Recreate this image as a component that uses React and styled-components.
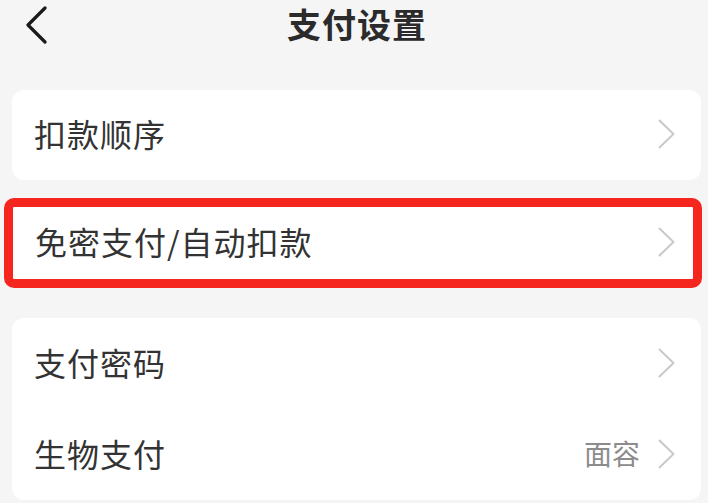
import React from 'react';
import styled, { createGlobalStyle } from 'styled-components';

const GlobalStyle = createGlobalStyle`
  html, body {
    margin: 0;
    padding: 0;
    background: #f5f5f5;
  }
  body {
    font-family: "Noto Sans CJK SC", "Noto Sans", sans-serif;
    color: #333333;
  }
`;

const Page = styled.div`
  width: 708px;
  height: 503px;
  overflow: hidden;
  background: #f5f5f5;
`;

const Header = styled.div`
  position: relative;
  height: 50px;
  display: flex;
  align-items: center;
  justify-content: center;
`;

const BackButton = styled.button`
  position: absolute;
  left: 22px;
  top: 4px;
  width: 28px;
  height: 42px;
  padding: 0;
  border: none;
  background: transparent;
  display: flex;
  align-items: center;
  justify-content: center;
`;

const Title = styled.h1`
  margin: 0 0 3px;
  font-size: 34px;
  font-weight: 600;
  letter-spacing: 1px;
  color: #2b2b2b;
  line-height: 1;
  transform: translateX(3px);
`;

const Content = styled.div`
  display: flex;
  flex-direction: column;
  padding: 40px 7px 0 12px;
`;

const Card = styled.div`
  background: #ffffff;
  border-radius: 12px;
  display: flex;
  flex-direction: column;
  margin-bottom: ${({ gap }) => gap || 0}px;
`;

const Highlight = styled.div`
  margin: 0 -1px 30px -8px;
  border: 9px solid #f5261e;
  border-radius: 10px;
  background: #ffffff;
`;

const Row = styled.div`
  height: ${({ h }) => h}px;
  box-sizing: border-box;
  display: flex;
  align-items: center;
  padding: 0 ${({ right }) => right || 26}px 4px 22px;
`;

const Label = styled.span`
  flex: 1;
  font-size: 32px;
  letter-spacing: 1px;
  color: #333333;
  line-height: 1;
`;

const Value = styled.span`
  font-size: 28px;
  color: #8c8c8c;
  margin-right: 18px;
  line-height: 1;
`;

const ChevronIcon = styled.svg`
  flex: none;
  margin-top: 2px;
`;

const Chevron = () => (
  <ChevronIcon width="17" height="30" viewBox="0 0 17 30" fill="none">
    <path d="M1.5 1.5 L15.5 15 L1.5 28.5" stroke="#c9c9c9" strokeWidth="2" strokeLinecap="round" strokeLinejoin="round" />
  </ChevronIcon>
);

const BackIcon = () => (
  <svg width="22" height="38" viewBox="0 0 22 38" fill="none">
    <path d="M20 2 L3 19 L20 36" stroke="#1a1a1a" strokeWidth="3.2" strokeLinecap="round" strokeLinejoin="round" />
  </svg>
);

const App = () => (
  <Page>
    <GlobalStyle />
    <Header>
      <BackButton>
        <BackIcon />
      </BackButton>
      <Title>支付设置</Title>
    </Header>
    <Content>
      <Card gap={18}>
        <Row h={90}>
          <Label>扣款顺序</Label>
          <Chevron />
        </Row>
      </Card>
      <Highlight>
        <Row h={72} right={18}>
          <Label>免密支付/自动扣款</Label>
          <Chevron />
        </Row>
      </Highlight>
      <Card>
        <Row h={91}>
          <Label>支付密码</Label>
          <Chevron />
        </Row>
        <Row h={91}>
          <Label>生物支付</Label>
          <Value>面容</Value>
          <Chevron />
        </Row>
      </Card>
    </Content>
  </Page>
);

export default App;
